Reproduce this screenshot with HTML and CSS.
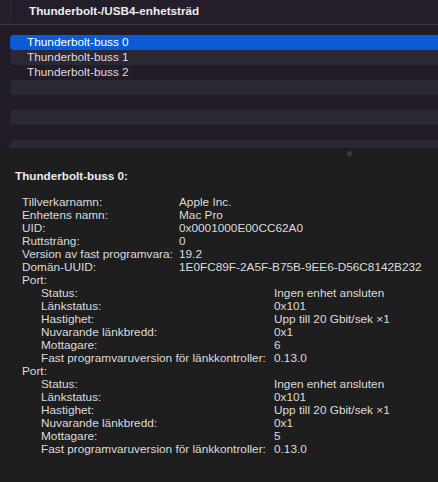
FILE: index.html
```html
<!DOCTYPE html>
<html lang="sv">
<head>
<meta charset="utf-8">
<link rel="stylesheet" href="styles.css">
</head>
<body>
<div class="window">
  <div class="header">
    <div class="header-inner">Thunderbolt-/USB4-enhetsträd</div>
  </div>
  <div class="list">
    <div class="row selected">Thunderbolt-buss 0</div>
    <div class="row stripe">Thunderbolt-buss 1</div>
    <div class="row">Thunderbolt-buss 2</div>
    <div class="row stripe"></div>
    <div class="row"></div>
    <div class="row stripe"></div>
    <div class="row"></div>
    <div class="row stripe"></div>
  </div>
  <div class="details">
    <div class="splitter"><span class="dot"></span></div>
    <div class="d-title">Thunderbolt-buss 0:</div>
    <div class="grid lvl1">
      <span>Tillverkarnamn:</span><span>Apple Inc.</span>
      <span>Enhetens namn:</span><span>Mac Pro</span>
      <span>UID:</span><span>0x0001000E00CC62A0</span>
      <span>Ruttsträng:</span><span>0</span>
      <span>Version av fast programvara:</span><span>19.2</span>
      <span>Domän-UUID:</span><span>1E0FC89F-2A5F-B75B-9EE6-D56C8142B232</span>
    </div>
    <div class="port">Port:</div>
    <div class="grid lvl2">
      <span>Status:</span><span>Ingen enhet ansluten</span>
      <span>Länkstatus:</span><span>0x101</span>
      <span>Hastighet:</span><span>Upp till 20 Gbit/sek ×1</span>
      <span>Nuvarande länkbredd:</span><span>0x1</span>
      <span>Mottagare:</span><span>6</span>
      <span>Fast programvaruversion för länkkontroller:</span><span>0.13.0</span>
    </div>
    <div class="port">Port:</div>
    <div class="grid lvl2">
      <span>Status:</span><span>Ingen enhet ansluten</span>
      <span>Länkstatus:</span><span>0x101</span>
      <span>Hastighet:</span><span>Upp till 20 Gbit/sek ×1</span>
      <span>Nuvarande länkbredd:</span><span>0x1</span>
      <span>Mottagare:</span><span>5</span>
      <span>Fast programvaruversion för länkkontroller:</span><span>0.13.0</span>
    </div>
  </div>
</div>
</body>
</html>
```
FILE: styles.css
```css
* { box-sizing: border-box; }
html, body {
  margin: 0;
  padding: 0;
  background: #1e1e1e;
}
body {
  font-family: "Liberation Sans", Arial, sans-serif;
  font-size: 11.8px;
  color: #dcdcdc;
  width: 438px;
  height: 482px;
  overflow: hidden;
}
.window {
  display: flex;
  flex-direction: column;
  height: 482px;
}
.header {
  height: 25px;
  background: #231e29;
  border-bottom: 1px solid #3a3541;
  padding-left: 10px;
}
.header-inner {
  height: 20px;
  border-left: 1px solid #2f2a35;
  padding-left: 18px;
  padding-top: 4px;
  font-weight: bold;
  font-size: 11.7px;
  color: #ececec;
}
.list {
  height: 123px;
  background: #211c27;
  padding-top: 10px;
  padding-left: 10px;
  overflow: hidden;
}
.row {
  height: 15px;
  line-height: 15px;
  padding-left: 17px;
  color: #dedce0;
  border-radius: 4px 0 0 4px;
}
.row.stripe { background: #2b2733; }
.row.selected { background: #0a5cd6; color: #ffffff; }
.details {
  flex: 1;
  background: #1e1e1e;
  padding-left: 15px;
}
.splitter {
  height: 8px;
  position: relative;
}
.dot {
  position: absolute;
  left: 332px;
  top: 3px;
  width: 5px;
  height: 5px;
  border-radius: 50%;
  background: #3c3c3c;
}
.d-title {
  font-weight: bold;
  font-size: 11.7px;
  line-height: 13px;
  margin-top: 13px;
  color: #ececec;
}
.grid {
  display: grid;
  line-height: 13px;
}
.lvl1 {
  margin-top: 14px;
  margin-left: 7px;
  grid-template-columns: 157px 1fr;
}
.port {
  margin-left: 7px;
  line-height: 13px;
}
.lvl2 {
  margin-left: 26px;
  grid-template-columns: 233px 1fr;
}
.grid span { white-space: nowrap; }
```
